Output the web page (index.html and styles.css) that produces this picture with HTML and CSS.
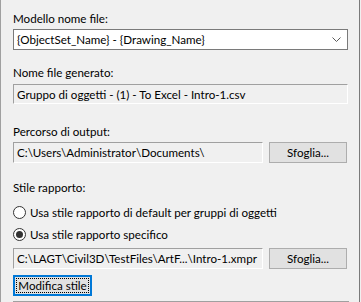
FILE: index.html
```html
<!DOCTYPE html>
<html>
<head>
<meta charset="utf-8">
<link rel="stylesheet" href="styles.css">
</head>
<body>
<div class="frame">
  <div class="label l1">Modello nome file:</div>
  <div class="combo">
    <span class="combo-text">{ObjectSet_Name} - {Drawing_Name}</span>
    <svg class="chev" width="9" height="5" viewBox="0 0 9 5"><path d="M0.5 0.5 L4.5 4.5 L8.5 0.5" fill="none" stroke="#5a5a5a" stroke-width="1"/></svg>
  </div>

  <div class="label l2">Nome file generato:</div>
  <div class="field wide">Gruppo di oggetti - (1) - To Excel - Intro-1.csv</div>

  <div class="label l3">Percorso di output:</div>
  <div class="row">
    <div class="field narrow">C:\Users\Administrator\Documents\</div>
    <div class="btn">Sfoglia...</div>
  </div>

  <div class="label l4">Stile rapporto:</div>
  <div class="radio r1"><span class="dot"></span><span>Usa stile rapporto di default per gruppi di oggetti</span></div>
  <div class="radio r2"><span class="dot on"></span><span>Usa stile rapporto specifico</span></div>
  <div class="row r3">
    <div class="field narrow">C:\LAGT\Civil3D\TestFiles\ArtF...\Intro-1.xmpr</div>
    <div class="btn">Sfoglia...</div>
  </div>
  <div class="btn focus">Modifica stile</div>
  <div class="rule"></div>
</div>
</body>
</html>
```

FILE: styles.css
```css
html, body {
  margin: 0;
  padding: 0;
  background: #f0f0f0;
}
body {
  font-family: Lato, "Noto Sans", sans-serif;
  font-size: 11.6px;
  color: #000;
  width: 361px;
  height: 302px;
  overflow: hidden;
}
.frame {
  box-sizing: border-box;
  width: 360px;
  height: 302px;
  border-left: 1px solid #a0a0a0;
  border-right: 1px solid #7a7a7a;
  padding-left: 12px;
  display: flex;
  flex-direction: column;
}
.label {
  height: 15px;
  line-height: 15px;
  white-space: nowrap;
}
.l1 { margin-top: 11px; }
.l2 { margin-top: 15px; }
.l3 { margin-top: 20px; }
.l4 { margin-top: 17px; }

.combo {
  box-sizing: border-box;
  margin-top: 3px;
  width: 335px;
  height: 21px;
  background: #fff;
  border: 1px solid #7a7a7a;
  display: flex;
  align-items: center;
  padding-left: 3px;
  padding-right: 6px;
}
.combo-text { flex: 1; white-space: nowrap; line-height: 19px; }
.chev { display: block; }

.field {
  box-sizing: border-box;
  height: 21px;
  line-height: 19px;
  background: #f0f0f0;
  border: 1px solid #ffffff;
  border-top-color: #a0a0a0;
  border-left-color: #a0a0a0;
  padding-left: 3px;
  white-space: nowrap;
  overflow: hidden;
}
.wide { width: 335px; margin-top: 4px; }
.narrow { width: 250px; }

.row {
  display: flex;
  gap: 6px;
  margin-top: 3px;
}
.btn {
  box-sizing: border-box;
  width: 78px;
  height: 21px;
  line-height: 19px;
  text-align: center;
  background: #e1e1e1;
  border: 1px solid #adadad;
  white-space: nowrap;
}

.radio {
  display: flex;
  align-items: center;
  gap: 4px;
  height: 15px;
  line-height: 15px;
  white-space: nowrap;
}
.r1 { margin-top: 10px; }
.r2 { margin-top: 7px; }
.dot {
  box-sizing: border-box;
  width: 13px;
  height: 13px;
  border: 1px solid #333;
  border-radius: 50%;
  background: #fff;
  display: flex;
  align-items: center;
  justify-content: center;
}
.dot.on::before {
  content: "";
  width: 7px;
  height: 7px;
  border-radius: 50%;
  background: #333;
}
.r3 { margin-top: 6px; }

.btn.focus {
  margin-top: 6px;
  width: 79px;
  border: 2px solid #0078d7;
  line-height: 17px;
  position: relative;
}
.btn.focus::after {
  content: "";
  position: absolute;
  inset: 1px;
  border: 1px dotted #000;
}
.rule {
  margin-top: 5px;
  width: 336px;
  border-top: 1px solid #a0a0a0;
}
```
